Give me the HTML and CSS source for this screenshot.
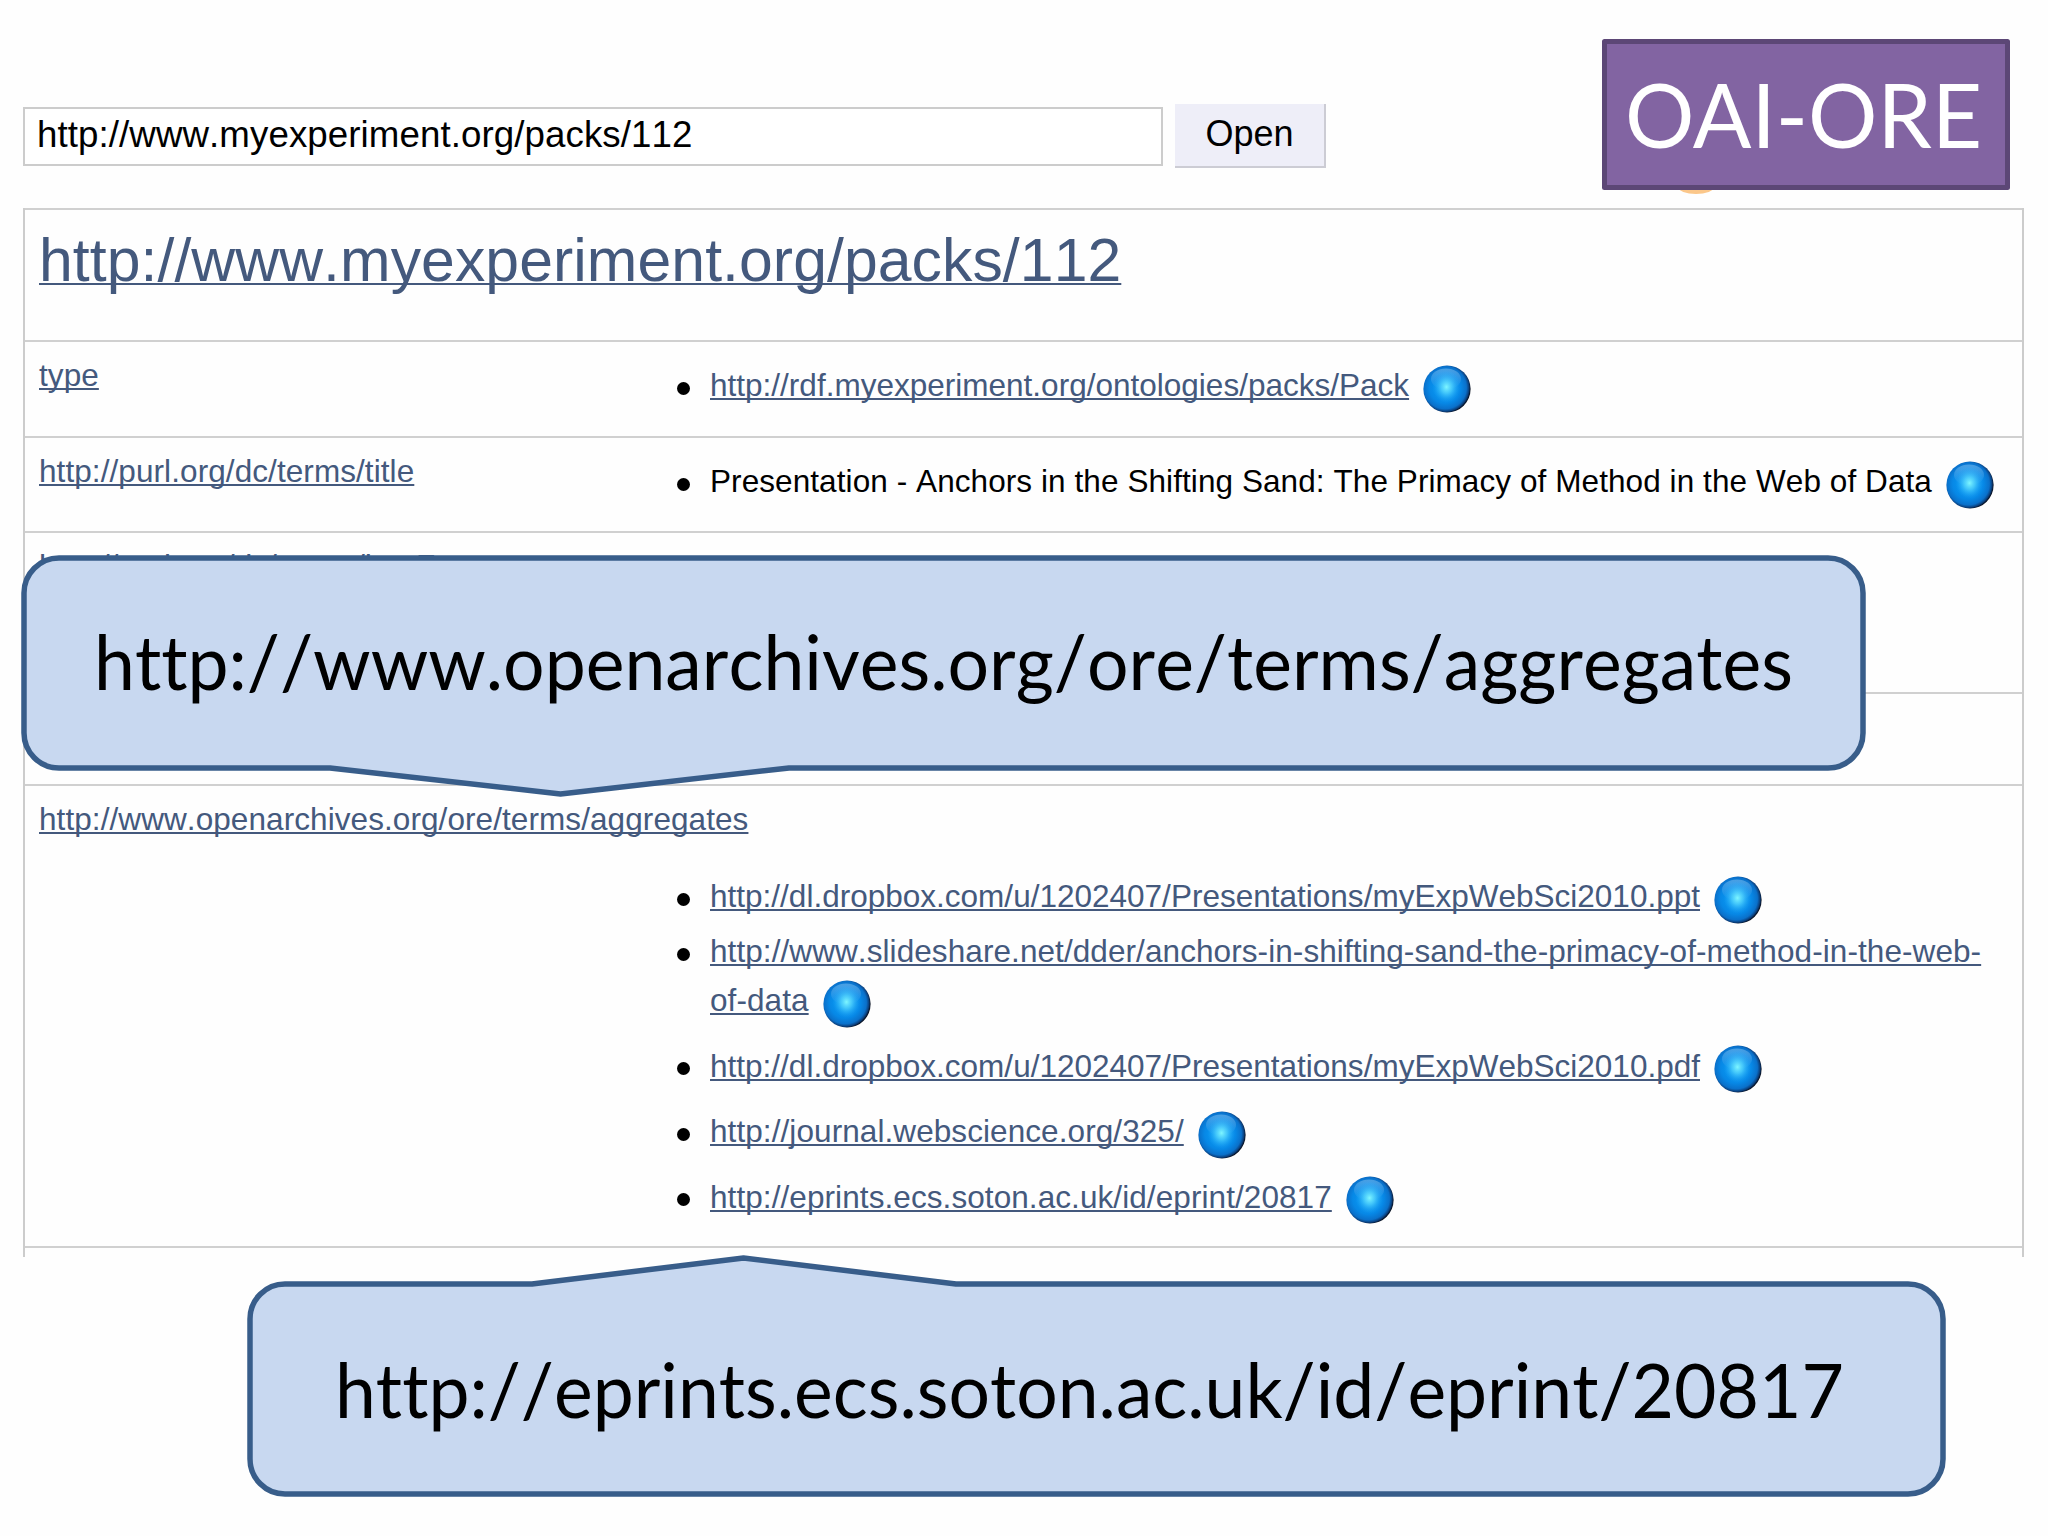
FILE: index.html
```html
<!DOCTYPE html>
<html lang="en">
<head>
    <meta charset="UTF-8">
    <title>http://www.myexperiment.org/packs/112</title>
    <link rel="stylesheet" href="styles.css">
</head>
<body>
    <!-- shared ball icon -->
    <svg class="defs" width="0" height="0">
        <defs>
            <radialGradient id="ballFill" cx="0.46" cy="0.47" r="0.55">
                <stop offset="0" stop-color="#0aa4fa"/>
                <stop offset="0.6" stop-color="#0788e6"/>
                <stop offset="0.82" stop-color="#0a70ca"/>
                <stop offset="0.92" stop-color="#0b3f7c"/>
                <stop offset="0.98" stop-color="#060f20"/>
            </radialGradient>
            <radialGradient id="ballGlow">
                <stop offset="0" stop-color="#7ff6ff"/>
                <stop offset="0.4" stop-color="#4fd0fc" stop-opacity="0.8"/>
                <stop offset="1" stop-color="#1ea0f5" stop-opacity="0"/>
            </radialGradient>
            <linearGradient id="ballShine" x1="0" y1="0" x2="0" y2="1">
                <stop offset="0" stop-color="#8cc4f0" stop-opacity="0.5"/>
                <stop offset="1" stop-color="#8cc4f0" stop-opacity="0"/>
            </linearGradient>
            <symbol id="ball" viewBox="0 0 48 48">
                <circle cx="24" cy="24" r="23.6" fill="url(#ballFill)"/>
                <ellipse cx="23" cy="14" rx="15" ry="10.5" fill="url(#ballShine)"/>
                <ellipse cx="23.500" cy="22" rx="14" ry="16" fill="url(#ballGlow)"/>
            </symbol>
        </defs>
    </svg>

    <form class="address">
        <input type="text" class="url" value="http://www.myexperiment.org/packs/112">
        <button type="button" class="open">Open</button>
    </form>

    <div class="browser">
        <div class="row heading">
            <h1><a>http://www.myexperiment.org/packs/112</a></h1>
        </div>
        <div class="row type">
            <div class="name"><a>type</a></div>
            <ul>
                <li><a class="narrow">http://rdf.myexperiment.org/ontologies/packs/Pack</a><svg class="ball"><use href="#ball"/></svg></li>
            </ul>
        </div>
        <div class="row title">
            <div class="name"><a>http://purl.org/dc/terms/title</a></div>
            <ul>
                <li><span>Presentation - Anchors in the Shifting Sand: The Primacy of Method in the Web of Data</span><svg class="ball"><use href="#ball"/></svg></li>
            </ul>
        </div>
        <div class="row format">
            <div class="name"><a>http://purl.org/dc/terms/hasFormat</a></div>
        </div>
        <div class="row empty"></div>
        <div class="row aggregates">
            <div class="name"><a>http://www.openarchives.org/ore/terms/aggregates</a></div>
            <ul>
                <li class="tight"><a class="narrow">http://dl.dropbox.com/u/1202407/Presentations/myExpWebSci2010.ppt</a><svg class="ball"><use href="#ball"/></svg></li>
                <li><a>http://www.slideshare.net/dder/anchors-in-shifting-sand-the-primacy-of-method-in-the-web-<br>of-data</a><svg class="ball"><use href="#ball"/></svg></li>
                <li><a class="narrow">http://dl.dropbox.com/u/1202407/Presentations/myExpWebSci2010.pdf</a><svg class="ball"><use href="#ball"/></svg></li>
                <li><a>http://journal.webscience.org/325/</a><svg class="ball"><use href="#ball"/></svg></li>
                <li><a>http://eprints.ecs.soton.ac.uk/id/eprint/20817</a><svg class="ball"><use href="#ball"/></svg></li>
            </ul>
        </div>
        <div class="row last"></div>
    </div>

    <div class="smudge"></div>
    <svg class="badge" viewBox="0 0 408 151">
        <rect x="2.5" y="2.5" width="403" height="146"/>
        <text x="23" y="109" textLength="357" lengthAdjust="spacingAndGlyphs">OAI-ORE</text>
    </svg>

    <svg class="callout callout-predicate" viewBox="0 0 1846 243">
        <path d="M38 3H1807A35 35 0 0 1 1842 38V178A35 35 0 0 1 1807 213H768L539.500 239L309 213H38A35 35 0 0 1 3 178V38A35 35 0 0 1 38 3Z"/>
        <text x="73" y="135" textLength="1699" lengthAdjust="spacingAndGlyphs">http://www.openarchives.org/ore/terms/aggregates</text>
    </svg>

    <svg class="callout callout-object" viewBox="0 0 1700 243">
        <path d="M38 30H285L496.500 4L709 30H1661A35 35 0 0 1 1696 65V205A35 35 0 0 1 1661 240H38A35 35 0 0 1 3 205V65A35 35 0 0 1 38 30Z"/>
        <text x="88" y="164" textLength="1509" lengthAdjust="spacingAndGlyphs">http://eprints.ecs.soton.ac.uk/id/eprint/20817</text>
    </svg>
</body>
</html>
```
FILE: styles.css
```css
body {
    position: relative;
    box-sizing: border-box;
    width: 2048px;
    height: 1536px;
    margin: 0;
    padding: 104px 24px 0 23px;
    overflow: hidden;
    background-color: #fefefe;
    font-family: "Liberation Sans", Arial, sans-serif;
    font-size: 31.5px;
    font-kerning: none;
    letter-spacing: 0.08px;
    color: #000;
}
.defs {
    position: absolute;
}

/* address bar */
.address {
    display: flex;
    align-items: center;
    gap: 12px;
    height: 64px;
    margin-bottom: 40px;
}
.url {
    box-sizing: border-box;
    width: 1140px;
    height: 59px;
    padding: 0 0 2px 12px;
    border: 2px solid #ccc;
    background-color: #fff;
    font: 36.7px "Liberation Sans", Arial, sans-serif;
    font-kerning: none;
    letter-spacing: 0.08px;
    color: #000;
}
.open {
    box-sizing: border-box;
    width: 151px;
    height: 64px;
    padding: 0 0 2px;
    border: solid #ccccd4;
    border-width: 0 2px 2px 0;
    background-color: #eeeef8;
    font: 36px "Liberation Sans", Arial, sans-serif;
    color: #000;
}

/* property table */
.browser {
    border: solid #ccc;
    border-width: 0 2px;
}
.row {
    box-sizing: border-box;
    display: grid;
    grid-template-columns: 668px 1fr;
    align-content: start;
    padding-left: 14px;
    border-top: 2px solid #d0d0d0;
}
.heading { height: 132px; }
.type { height: 96px; }
.title { height: 95px; }
.format { height: 161px; }
.empty { height: 92px; }
.aggregates { height: 462px; }
.last { height: 11px; }

h1 {
    grid-column: 1 / 3;
    margin: 0;
    font-size: 60.7px;
    font-weight: normal;
    line-height: 100px;
}
a {
    color: #44597d;
    text-decoration: underline;
    text-decoration-thickness: 2px;
    text-decoration-skip-ink: none;
    text-underline-offset: 2px;
}
.narrow {
    letter-spacing: 0.01px;
}
.name {
    padding-top: 9px;
    line-height: 49px;
    white-space: nowrap;
}
ul {
    grid-column: 2;
    margin: 0;
    padding: 19px 0 0;
    list-style: none;
    line-height: 49px;
    white-space: nowrap;
}
.aggregates ul {
    padding-top: 28px;
}
.aggregates .name {
    grid-column: 1 / 3;
}
li {
    display: block;
    position: relative;
    padding-left: 3px;
    margin-bottom: 16.5px;
}
.tight {
    margin-bottom: 6px;
}
li::before {
    content: "";
    position: absolute;
    left: -30px;
    top: 20.5px;
    width: 13px;
    height: 13px;
    border-radius: 50%;
    background-color: #000;
}
.ball {
    width: 48px;
    height: 48px;
    margin: -10px 0 -10px 14px;
    vertical-align: -6.5px;
}

/* annotations over the page */
.smudge {
    position: absolute;
    left: 1678px;
    top: 180px;
    width: 36px;
    height: 14px;
    border-radius: 50%;
    background-color: #fbc78a;
}
.badge {
    position: absolute;
    left: 1602px;
    top: 39px;
    width: 408px;
    height: 151px;
}
.badge rect {
    fill: #8264a2;
    stroke: #5c4776;
    stroke-width: 5px;
    stroke-linejoin: round;
}
.badge text {
    font: 90px Lato, sans-serif;
    fill: #fff;
    letter-spacing: 0;
}
.callout {
    position: absolute;
    overflow: visible;
}
.callout path {
    fill: #c8d8f0;
    stroke: #385d8a;
    stroke-width: 5.5px;
    stroke-linejoin: round;
}
.callout text {
    font: 75px Lato, sans-serif;
    font-kerning: none;
    font-variant-ligatures: none;
    fill: #000;
    letter-spacing: 0;
}
.callout-predicate {
    left: 21px;
    top: 555px;
    width: 1846px;
    height: 243px;
}
.callout-object {
    left: 247px;
    top: 1254px;
    width: 1700px;
    height: 243px;
}
```
